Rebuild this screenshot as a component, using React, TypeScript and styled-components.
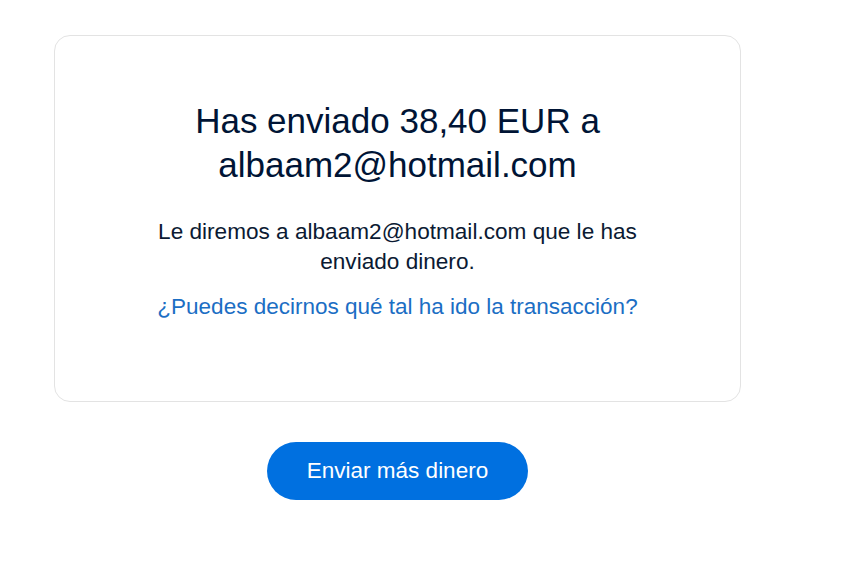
import React from "react";
import styled, { createGlobalStyle } from "styled-components";

const GlobalStyle = createGlobalStyle`
  html, body {
    margin: 0;
    padding: 0;
    background: #ffffff;
  }
  body {
    font-family: "Liberation Sans", Arial, sans-serif;
  }
`;

export default function App() {
  return (
    <>
      <GlobalStyle />
      <Page>
        <Column>
          <Card>
            <Title>
              Has enviado 38,40 EUR a
              <br />
              albaam2@hotmail.com
            </Title>
            <Message>
              Le diremos a albaam2@hotmail.com que le has enviado dinero.
            </Message>
            <FeedbackLink href="#">
              ¿Puedes decirnos qué tal ha ido la transacción?
            </FeedbackLink>
          </Card>
          <PrimaryButton type="button">Enviar más dinero</PrimaryButton>
        </Column>
      </Page>
    </>
  );
}

const Page = styled.div`
  display: flex;
  width: 100%;
  min-height: 587px;
  padding: 35px 0 0 54px;
  box-sizing: border-box;
`;

const Column = styled.div`
  display: flex;
  flex-direction: column;
  align-items: center;
  width: 687px;
`;

const Card = styled.div`
  display: flex;
  flex-direction: column;
  align-items: center;
  width: 100%;
  box-sizing: border-box;
  height: 367px;
  padding-top: 63px;
  border: 1px solid #e3e3e3;
  border-radius: 16px;
  background: #ffffff;
`;

const Title = styled.h1`
  margin: 0;
  font-size: 35px;
  font-weight: 400;
  line-height: 44px;
  text-align: center;
  color: #001435;
`;

const Message = styled.p`
  margin: 30px 0 0;
  max-width: 500px;
  font-size: 22.6px;
  line-height: 30px;
  text-align: center;
  color: #0b1a33;
`;

const FeedbackLink = styled.a`
  margin-top: 15px;
  font-size: 22.5px;
  line-height: 30px;
  text-align: center;
  color: #1b6ec4;
  text-decoration: none;
`;

const PrimaryButton = styled.button`
  margin-top: 40px;
  height: 58px;
  padding: 0 40px;
  border: none;
  border-radius: 29px;
  background: #0070e0;
  color: #ffffff;
  font-family: "Liberation Sans", Arial, sans-serif;
  font-size: 22.5px;
  cursor: pointer;
`;
